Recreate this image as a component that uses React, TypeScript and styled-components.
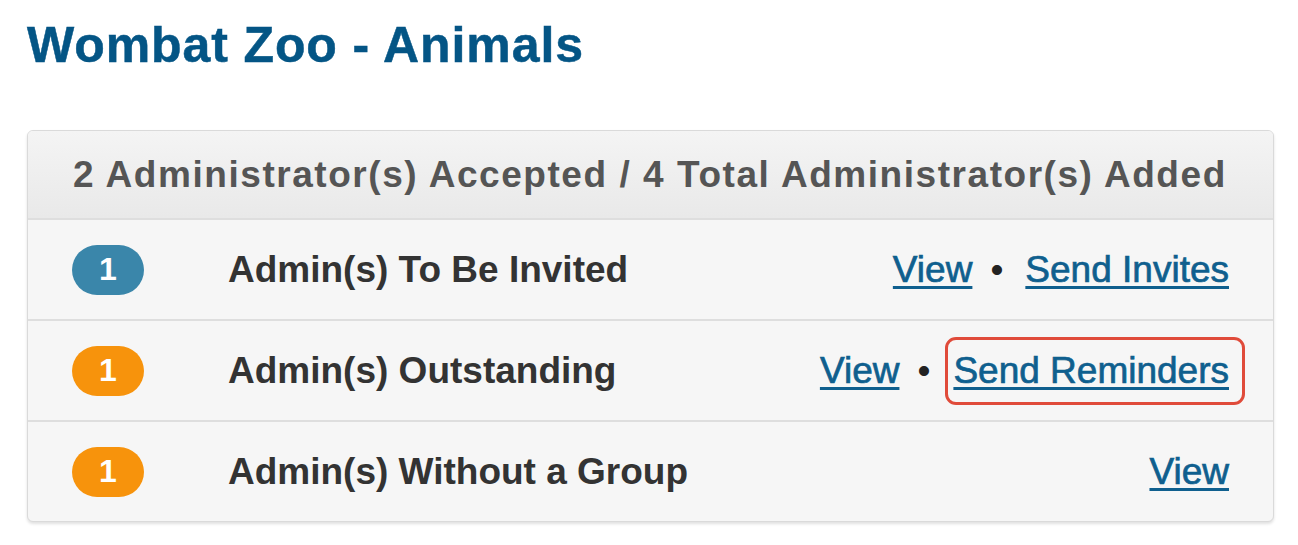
import React from "react";
import styled, { createGlobalStyle } from "styled-components";

const Global = createGlobalStyle`
  html, body { margin: 0; padding: 0; background: #ffffff; }
  body { font-family: "Liberation Sans", Arial, sans-serif; }
  * { box-sizing: border-box; }
`;

const Page = styled.div`
  padding: 17px 24px 20px 27px;
`;

const Title = styled.h1`
  margin: 0 0 56px 0;
  font-size: 50px;
  line-height: 57px;
  font-weight: 700;
  letter-spacing: 0.9px;
  color: #045585;
  -webkit-text-stroke: 0.5px #045585;
`;

const Panel = styled.section`
  border: 1px solid #dadada;
  border-radius: 6px;
  background: #f6f6f6;
  box-shadow: 0 2px 3px rgba(0, 0, 0, 0.12);
  overflow: hidden;
`;

const Header = styled.div`
  height: 87px;
  display: flex;
  align-items: center;
  padding: 0 20px 0 45px;
  background: linear-gradient(#f4f4f4, #e9e9e9);
  font-size: 37px;
  font-weight: 700;
  letter-spacing: 1.55px;
  white-space: nowrap;
  color: #555555;
`;

const Row = styled.div`
  height: 101px;
  display: flex;
  align-items: center;
  padding: 0 44px 0 44px;
  border-top: 2px solid #dedede;
`;

const Badge = styled.span<{ $tone: "blue" | "orange" }>`
  width: 72px;
  height: 50px;
  border-radius: 25px;
  display: inline-flex;
  align-items: center;
  justify-content: center;
  background: ${(p) => (p.$tone === "blue" ? "#3a86aa" : "#f7930c")};
  color: #ffffff;
  font-size: 32px;
  font-weight: 700;
  flex: none;
`;

const Label = styled.span`
  margin-left: 84px;
  flex: 1;
  font-size: 37px;
  font-weight: 700;
  color: #333333;
`;

const Actions = styled.div`
  display: flex;
  align-items: center;
  font-size: 37px;
`;

const Link = styled.a`
  color: #0f5f8e;
  text-decoration: underline;
  text-decoration-thickness: 3px;
  text-underline-offset: 4px;
  -webkit-text-stroke: 0.7px #0f5f8e;
  cursor: pointer;
`;

const Dot = styled.span`
  margin: 0 22px 0 18px;
  color: #222222;
`;

const Highlight = styled.span`
  display: inline-flex;
  align-items: center;
  height: 68px;
  margin-left: -7px;
  margin-right: -16px;
  padding: 0 13px 0 5px;
  border: 3px solid #e04b3a;
  border-radius: 11px;
`;

type Item = {
  count: number;
  tone: "blue" | "orange";
  label: string;
  action?: string;
  highlight?: boolean;
};

const items: Item[] = [
  { count: 1, tone: "blue", label: "Admin(s) To Be Invited", action: "Send Invites" },
  { count: 1, tone: "orange", label: "Admin(s) Outstanding", action: "Send Reminders", highlight: true },
  { count: 1, tone: "orange", label: "Admin(s) Without a Group" },
];

export default function App() {
  return (
    <>
      <Global />
      <Page>
        <Title>Wombat Zoo - Animals</Title>
        <Panel>
          <Header>2 Administrator(s) Accepted / 4 Total Administrator(s) Added</Header>
          {items.map((it) => (
            <Row key={it.label}>
              <Badge $tone={it.tone}>{it.count}</Badge>
              <Label>{it.label}</Label>
              <Actions>
                <Link>View</Link>
                {it.action && (
                  <>
                    <Dot>•</Dot>
                    {it.highlight ? (
                      <Highlight>
                        <Link>{it.action}</Link>
                      </Highlight>
                    ) : (
                      <Link>{it.action}</Link>
                    )}
                  </>
                )}
              </Actions>
            </Row>
          ))}
        </Panel>
      </Page>
    </>
  );
}
